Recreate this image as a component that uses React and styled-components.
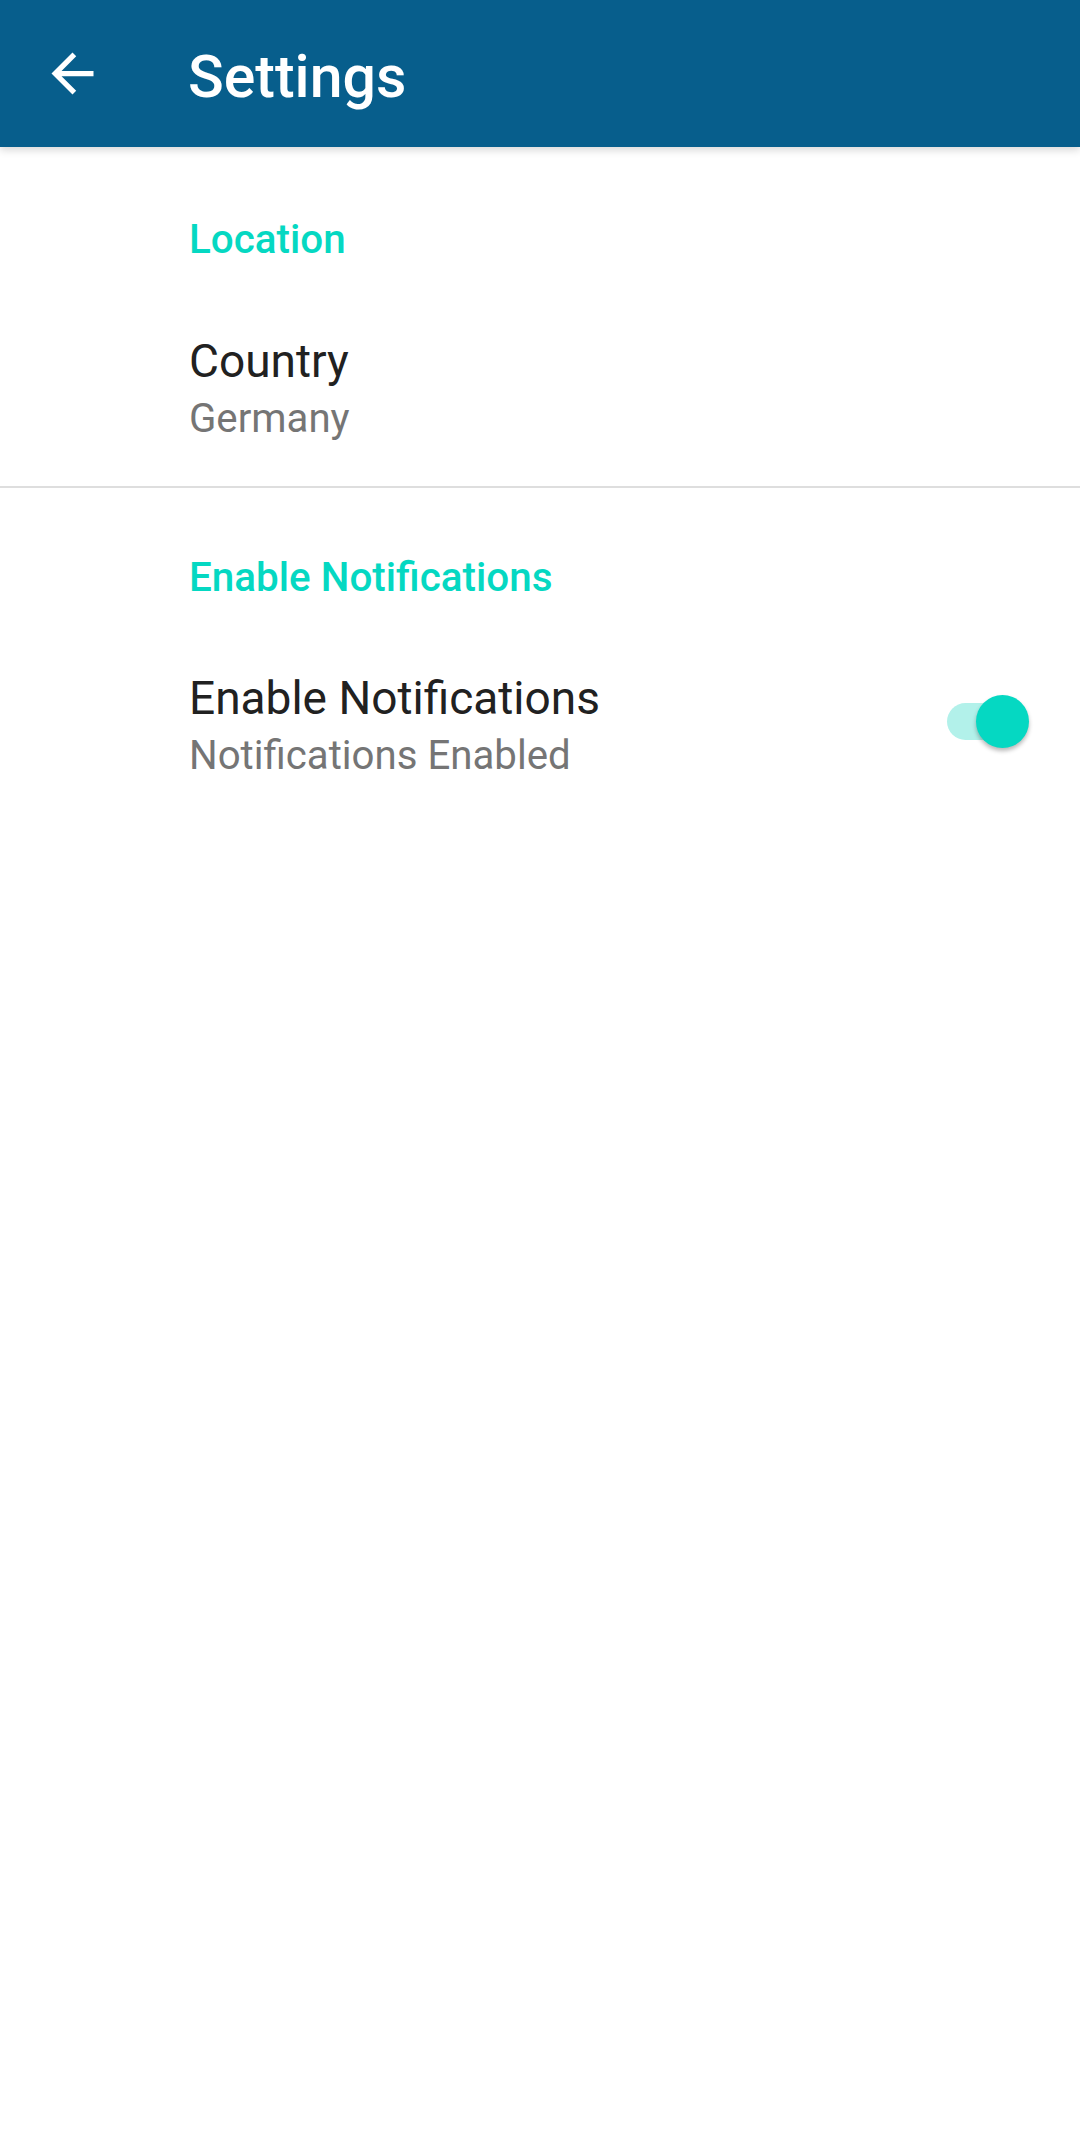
import React from "react";
import styled, { createGlobalStyle } from "styled-components";

const Global = createGlobalStyle`
  html, body { margin: 0; padding: 0; background: #ffffff; }
  body { font-family: Roboto, "Noto Sans", "Liberation Sans", sans-serif; }
  * { box-sizing: border-box; }
`;

const Screen = styled.div`
  width: 1080px;
  min-height: 2131px;
  background: #ffffff;
  display: flex;
  flex-direction: column;
`;

const Toolbar = styled.header`
  position: relative;
  z-index: 1;
  height: 147px;
  background: #075e8c;
  display: flex;
  align-items: center;
  padding-left: 41px;
  box-shadow: 0 3px 8px rgba(0, 0, 0, 0.16);
`;

const BackButton = styled.button`
  width: 63px;
  height: 63px;
  padding: 0;
  border: none;
  background: transparent;
  display: flex;
  align-items: center;
  justify-content: center;
  color: #ffffff;
`;

const Title = styled.h1`
  margin: 6px 0 0 84px;
  font-family: Roboto, "Noto Sans", sans-serif;
  font-weight: 500;
  font-size: 59px;
  line-height: 68px;
  color: #ffffff;
`;

const List = styled.main`
  display: flex;
  flex-direction: column;
  padding-top: 3px;
`;

const Category = styled.section`
  display: flex;
  flex-direction: column;
  padding: 66px 0 ${(p) => p.$bottom}px 189px;
  border-bottom: ${(p) => (p.$divider ? "2px solid #dedede" : "none")};
`;

const CategoryTitle = styled.h2`
  margin: 0;
  font-family: Roboto, "Noto Sans", sans-serif;
  font-weight: 500;
  font-size: 40.4px;
  line-height: 48px;
  color: #05d8c2;
`;

const Item = styled.div`
  display: flex;
  align-items: center;
  justify-content: space-between;
  padding-right: 51px;
  margin-top: ${(p) => p.$top}px;
`;

const ItemText = styled.div`
  display: flex;
  flex-direction: column;
  gap: 6px;
`;

const ItemTitle = styled.div`
  font-size: 46px;
  line-height: 56px;
  color: #212121;
`;

const ItemSummary = styled.div`
  font-size: 40.2px;
  line-height: 48px;
  color: #757575;
`;

const Switch = styled.div`
  position: relative;
  width: 82px;
  height: 53px;
  margin-bottom: 7px;
  display: flex;
  align-items: center;
  flex-shrink: 0;
`;

const Track = styled.div`
  width: 72px;
  height: 37px;
  border-radius: 19px;
  background: #b2f1ea;
`;

const Thumb = styled.div`
  position: absolute;
  right: 0;
  top: 0;
  width: 53px;
  height: 53px;
  border-radius: 50%;
  background: #05d8c2;
  box-shadow: 0 3px 4px rgba(0, 0, 0, 0.28);
`;

export default function App() {
  return (
    <>
      <Global />
      <Screen>
        <Toolbar>
          <BackButton aria-label="Back">
            <svg width="63" height="63" viewBox="0 0 24 24" fill="#ffffff">
              <path d="M20 11H7.83l5.59-5.59L12 4l-8 8 8 8 1.41-1.41L7.83 13H20v-2z" />
            </svg>
          </BackButton>
          <Title>Settings</Title>
        </Toolbar>
        <List>
          <Category $divider $bottom={43}>
            <CategoryTitle>Location</CategoryTitle>
            <Item $top={69}>
              <ItemText>
                <ItemTitle>Country</ItemTitle>
                <ItemSummary>Germany</ItemSummary>
              </ItemText>
            </Item>
          </Category>
          <Category $bottom={0}>
            <CategoryTitle>Enable Notifications</CategoryTitle>
            <Item $top={68}>
              <ItemText>
                <ItemTitle>Enable Notifications</ItemTitle>
                <ItemSummary>Notifications Enabled</ItemSummary>
              </ItemText>
              <Switch>
                <Track />
                <Thumb />
              </Switch>
            </Item>
          </Category>
        </List>
      </Screen>
    </>
  );
}
